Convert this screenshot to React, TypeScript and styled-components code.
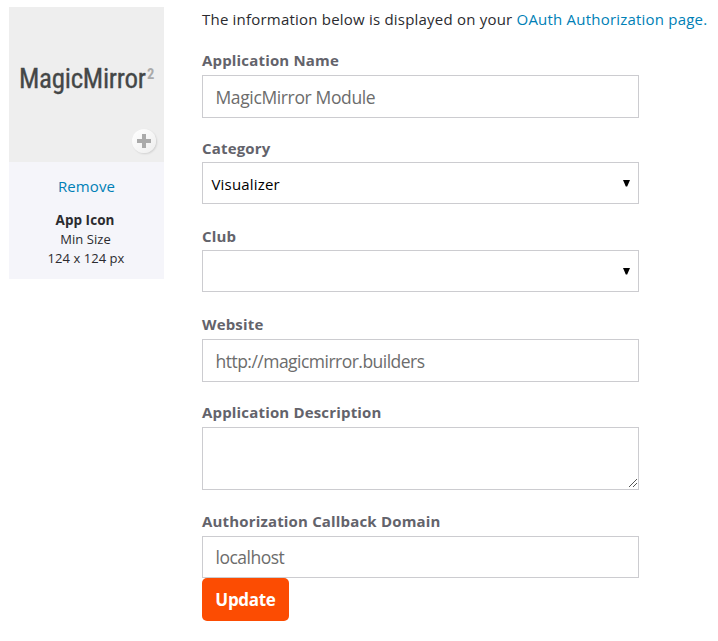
import React from "react";
import styled, { createGlobalStyle } from "styled-components";

const GlobalStyle = createGlobalStyle`
  *, *::before, *::after { box-sizing: border-box; }
  body {
    margin: 0;
    background: #fff;
    color: #2b2b2f;
    font-family: "Open Sans", "Noto Sans", sans-serif;
  }
`;

const Page = styled.main`
  display: flex;
  align-items: flex-start;
  gap: 38px;
  width: 718px;
  height: 641px;
  padding: 8px 0 0 9px;
  overflow: hidden;
`;

const IconCard = styled.aside`
  flex: none;
  width: 155px;
  height: 272px;
  margin-top: -1px;
  background: #f5f5fa;
  text-align: center;
`;

const IconPreview = styled.div`
  position: relative;
  height: 155px;
  padding: 54px 0 0 10px;
  background: #eee;
  text-align: left;
`;

const Wordmark = styled.div`
  display: flex;
  align-items: flex-start;
  width: 138px;
  color: #444747;
  font-family: "Roboto Condensed", Roboto, sans-serif;
  font-size: 27px;
  font-weight: 400;
  line-height: 36px;
  white-space: nowrap;
`;

const WordmarkText = styled.span`
  flex: none;
  width: 128px;
  letter-spacing: -0.3px;
  -webkit-text-stroke: 0.3px #444747;
`;

const WordmarkPower = styled.sup`
  color: #aaa;
  font-size: 14.5px;
  font-weight: 700;
  line-height: 28px;
`;

const AddButton = styled.button`
  position: absolute;
  right: 8px;
  bottom: 9px;
  display: grid;
  place-items: center;
  width: 24px;
  height: 24px;
  padding: 0;
  border: 0;
  border-radius: 50%;
  background: linear-gradient(135deg, #fff, #eee);
  box-shadow: 1px 1px 2px rgba(0, 0, 0, 0.13);
`;

const Link = styled.a`
  color: #007fb6;
  text-decoration: none;
`;

const RemoveLink = styled(Link)`
  display: block;
  margin-top: 13px;
  font-size: 15px;
  line-height: 22px;
  letter-spacing: 0.1px;
`;

const IconNote = styled.p<{ $strong?: boolean }>`
  margin: 0;
  padding-left: ${(p) => (p.$strong ? 0 : 1)}px;
  font-size: ${(p) => (p.$strong ? 13.5 : 13)}px;
  font-weight: ${(p) => (p.$strong ? 700 : 400)};
  line-height: 19px;
  letter-spacing: 0.05px;
`;

const SizeNote = styled(IconNote)`
  padding-left: 2px;
`;

const IconNotes = styled.div`
  margin-top: 14px;
  padding-right: 3px;
`;

const Form = styled.form`
  flex: none;
  width: 512px;
`;

const Intro = styled.p`
  margin: 0 0 20px;
  font-size: 15px;
  line-height: 22px;
  letter-spacing: 0.21px;
  white-space: nowrap;
`;

const Field = styled.div<{ $pitch: number }>`
  width: 437px;
  height: ${(p) => p.$pitch}px;
`;

const Label = styled.label<{ $height?: number }>`
  display: block;
  height: ${(p) => p.$height ?? 25}px;
  color: #63636b;
  font-size: 15px;
  font-weight: 700;
  line-height: 20px;
  letter-spacing: 0.17px;
`;

const Input = styled.input<{ $height?: number; $spacing?: number }>`
  display: block;
  width: 100%;
  height: ${(p) => p.$height ?? 43}px;
  padding: ${(p) => (p.$height ? "0 12.5px 1px" : "1px 12.5px 0")};
  border: 1px solid #ccccd0;
  border-radius: 0;
  background: #fff;
  color: #6c6c6c;
  font: 400 17.5px "Open Sans", sans-serif;
  letter-spacing: ${(p) => p.$spacing ?? 0}px;
`;

const Picker = styled.button`
  display: flex;
  align-items: center;
  justify-content: space-between;
  width: 100%;
  height: 42px;
  padding: 2px 8px 0 8.5px;
  border: 1px solid #ccccd0;
  background: #fff;
  color: #000;
  font: 400 15px "Open Sans", sans-serif;
  letter-spacing: 0.17px;
  text-align: left;
`;

const Arrow = styled.svg`
  flex: none;
  margin: -2px 0 0 auto;
`;

const AreaWrap = styled.div`
  position: relative;
  height: 63px;
`;

const Area = styled.textarea`
  display: block;
  width: 100%;
  height: 63px;
  border: 1px solid #ccccd0;
  background: #fff;
  resize: none;
`;

const Grip = styled.svg`
  position: absolute;
  right: 2px;
  bottom: 3px;
`;

const UpdateButton = styled.button`
  display: block;
  width: 87px;
  height: 43px;
  padding: 0;
  border: 0;
  border-radius: 5px;
  background: #fc4c02;
  color: #fff;
  font: 700 17px "Open Sans", sans-serif;
  letter-spacing: -0.3px;
`;

function DropArrow() {
  return (
    <Arrow width="7" height="7" viewBox="0 0 7 7" aria-hidden="true">
      <path d="M0 0h7L4.2 6.6H2.8z" fill="#000" />
    </Arrow>
  );
}

export default function App() {
  return (
    <>
      <GlobalStyle />
      <Page>
        <IconCard>
          <IconPreview>
            <Wordmark>
              <WordmarkText>MagicMirror</WordmarkText>
              <WordmarkPower>2</WordmarkPower>
            </Wordmark>
            <AddButton type="button" aria-label="Add icon">
              <svg width="14" height="14" viewBox="0 0 14 14">
                <path d="M5 0h4v5h5v4H9v5H5V9H0V5h5z" fill="#aaa" />
              </svg>
            </AddButton>
          </IconPreview>
          <RemoveLink href="#">Remove</RemoveLink>
          <IconNotes>
            <IconNote $strong>App Icon</IconNote>
            <IconNote>Min Size</IconNote>
            <SizeNote>124 x 124 px</SizeNote>
          </IconNotes>
        </IconCard>

        <Form onSubmit={(e) => e.preventDefault()}>
          <Intro>
            The information below is displayed on your{" "}
            <Link href="#">OAuth Authorization page.</Link>
          </Intro>
          <Field $pitch={88}>
            <Label htmlFor="name">Application Name</Label>
            <Input id="name" $spacing={-0.37} defaultValue="MagicMirror Module" />
          </Field>
          <Field $pitch={88}>
            <Label $height={24}>Category</Label>
            <Picker type="button">
              Visualizer
              <DropArrow />
            </Picker>
          </Field>
          <Field $pitch={88}>
            <Label $height={24}>Club</Label>
            <Picker type="button" aria-label="Club">
              <DropArrow />
            </Picker>
          </Field>
          <Field $pitch={88}>
            <Label htmlFor="site">Website</Label>
            <Input id="site" $spacing={-0.52} defaultValue="http://magicmirror.builders" />
          </Field>
          <Field $pitch={109}>
            <Label htmlFor="about">Application Description</Label>
            <AreaWrap>
              <Area id="about" />
              <Grip width="8" height="8" viewBox="0 0 8 8" aria-hidden="true">
                <path d="M0 8L8 0M4 8l4-4" stroke="#555" fill="none" />
              </Grip>
            </AreaWrap>
          </Field>
          <Field $pitch={67}>
            <Label htmlFor="domain">Authorization Callback Domain</Label>
            <Input id="domain" $height={42} $spacing={-0.5} defaultValue="localhost" />
          </Field>
          <UpdateButton type="submit">Update</UpdateButton>
        </Form>
      </Page>
    </>
  );
}
